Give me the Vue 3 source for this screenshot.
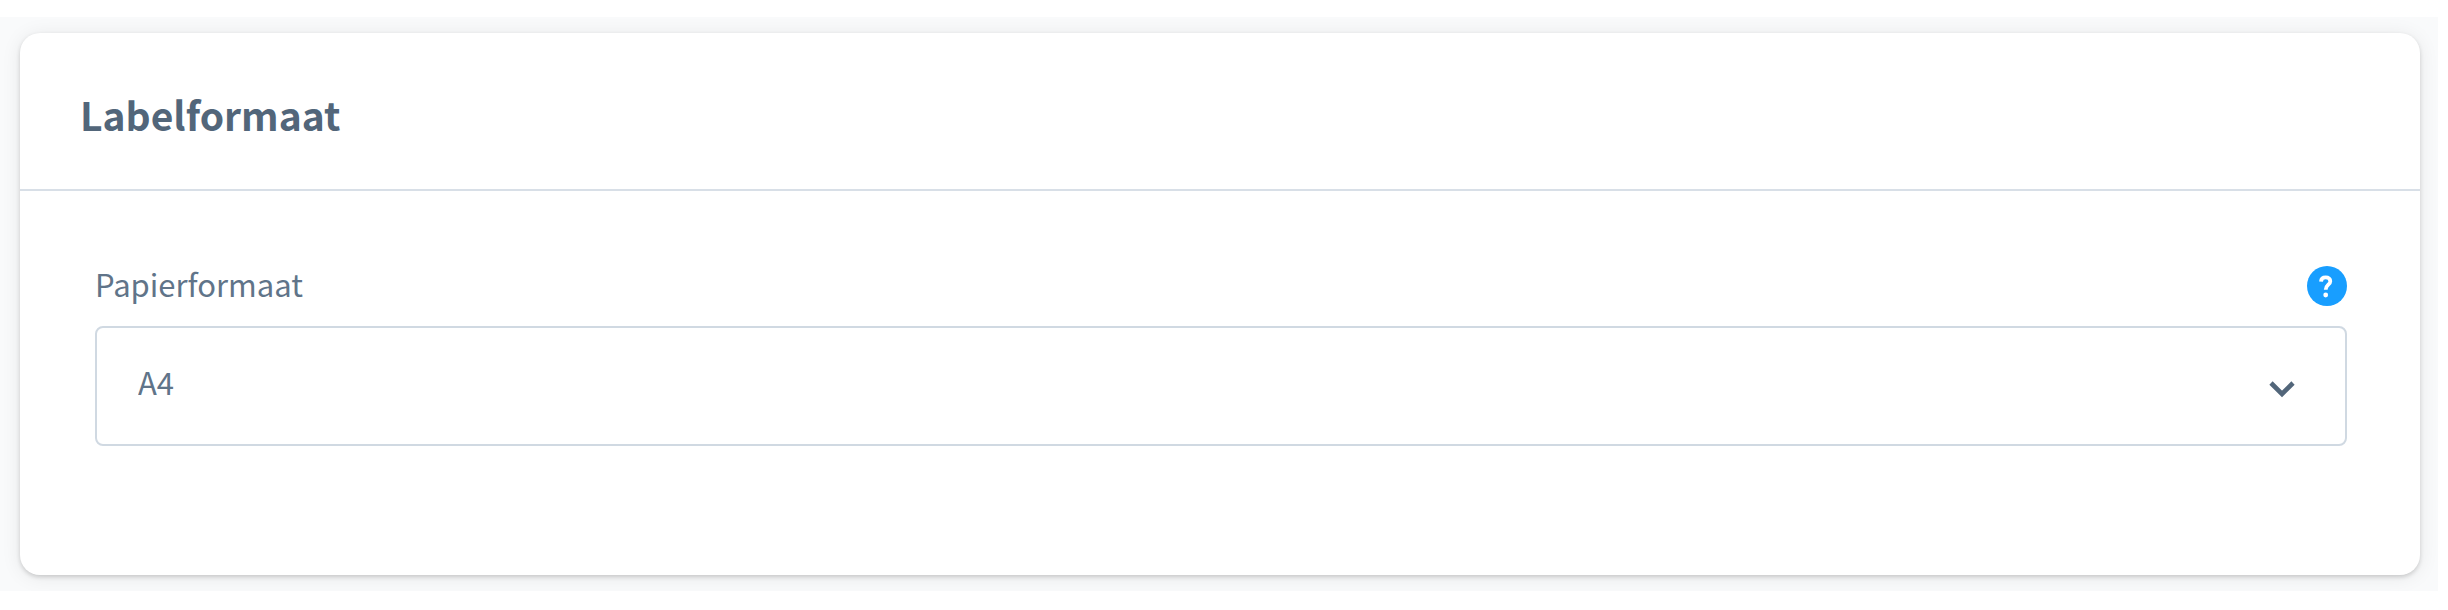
<script setup>
import { ref } from 'vue'

const formats = ['A4', 'A6']
const format = ref('A4')
</script>

<template>
  <main class="page">
    <section class="card">
      <header class="card-header">
        <h2 class="title">Labelformaat</h2>
      </header>
      <div class="card-body">
        <div class="label-row">
          <label class="label" for="paper-format">Papierformaat</label>
          <button class="help" type="button" aria-label="Help">
            <svg viewBox="0 0 40 40" aria-hidden="true">
              <circle cx="20" cy="20" r="20" fill="#189eff" />
              <path
                d="M14 15.6C14.2 12.6 16 11.4 18.7 11.4C21.5 11.4 23.3 12.9 23.3 15.2C23.3 18.8 18.7 18.8 18.7 23.8"
                fill="none"
                stroke="#fff"
                stroke-width="3.8"
              />
              <circle cx="18.7" cy="29" r="2.4" fill="#fff" />
            </svg>
          </button>
        </div>
        <div class="select-wrap">
          <select id="paper-format" v-model="format" class="select">
            <option v-for="item in formats" :key="item" :value="item">{{ item }}</option>
          </select>
          <svg class="chevron" viewBox="0 0 26 18" aria-hidden="true">
            <path d="M2 3L13 14L24 3" fill="none" stroke="#52667a" stroke-width="4.6" />
          </svg>
        </div>
      </div>
    </section>
  </main>
</template>

<style>
body {
  background: #fff;
}
</style>

<style scoped>
.page {
  box-sizing: border-box;
  margin: 17px 10px 0 0;
  padding: 16px 18px 16px 20px;
  overflow: hidden;
  background: #f9fafb;
  font-family: "Noto Sans CJK SC", "Noto Sans", sans-serif;
}

.card {
  border-radius: 20px;
  background: #fff;
  box-shadow: 0 2px 4px rgba(0, 0, 0, 0.16), 0 2px 20px rgba(0, 0, 0, 0.08);
}

.card-header {
  padding: 53px 60px 47px;
  border-bottom: 2px solid #d8dfe7;
}

.title {
  margin: 0;
  color: #52667a;
  font-size: 39px;
  font-weight: 600;
  line-height: 56px;
}

.card-body {
  padding: 72px 73px 129px 75px;
}

.label-row {
  display: flex;
  align-items: center;
  justify-content: space-between;
  margin-bottom: 17px;
}

.label {
  padding-bottom: 4px;
  color: #607489;
  font-size: 31px;
  line-height: 42px;
}

.help {
  width: 40px;
  height: 40px;
  padding: 0;
  border: 0;
  border-radius: 50%;
  background: none;
  cursor: pointer;
}

.help svg {
  display: block;
  width: 100%;
  height: 100%;
}

.select-wrap {
  position: relative;
}

.select {
  display: block;
  box-sizing: border-box;
  width: 100%;
  height: 120px;
  padding: 0 96px 10px 41px;
  border: 2px solid #d0d9e2;
  border-radius: 8px;
  appearance: none;
  background: #fff;
  color: #607489;
  font-family: inherit;
  font-size: 31px;
}

.chevron {
  position: absolute;
  top: 54px;
  right: 52px;
  width: 26px;
  height: 18px;
  pointer-events: none;
}
</style>
